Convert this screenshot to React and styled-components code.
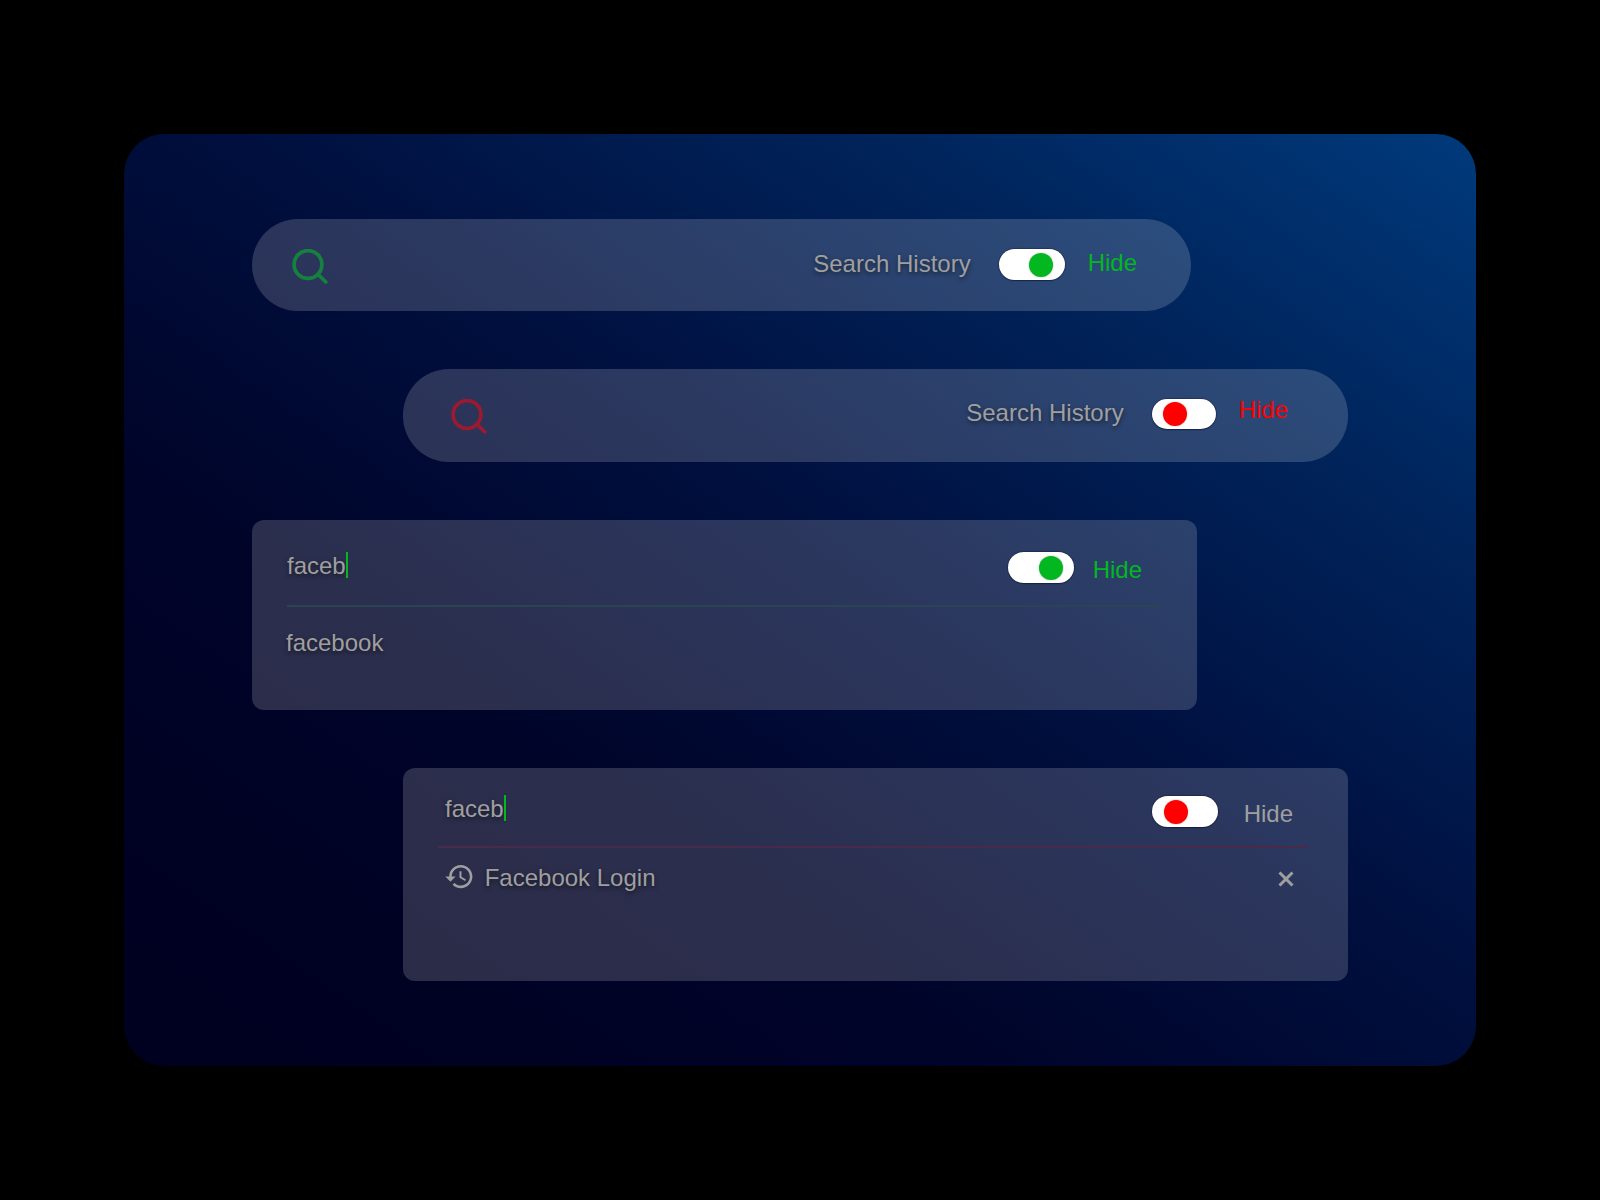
import React from 'react';
import styled, { createGlobalStyle } from 'styled-components';

const Global = createGlobalStyle`
  html, body { margin: 0; padding: 0; background: #000; }
  body { font-family: "Liberation Sans", Arial, sans-serif; }
`;

const Page = styled.div`
  width: 1600px;
  height: 1200px;
  padding: 134px 124px;
  box-sizing: border-box;
  background: #000;
`;

const Frame = styled.main`
  width: 1352px;
  height: 932px;
  box-sizing: border-box;
  padding: 85px 128px 0;
  border-radius: 40px;
  background: linear-gradient(to top right, #00001f 0%, #000429 32%, #000f3e 54%, #00235a 77%, #003a7c 100%);
  display: flex;
  flex-direction: column;
  align-items: flex-start;
  gap: 58px;
`;

const Pill = styled.section`
  width: ${p => p.$width}px;
  height: ${p => p.$height}px;
  margin-left: ${p => p.$indent || 0}px;
  border-radius: 46px;
  background: rgba(255, 255, 255, 0.17);
  box-sizing: border-box;
  padding: 30px ${p => p.$right}px 0 ${p => p.$left}px;
  display: flex;
  align-items: flex-start;
`;

const Card = styled.section`
  width: ${p => p.$width}px;
  height: ${p => p.$height}px;
  margin-left: ${p => p.$indent || 0}px;
  border-radius: 12px;
  background: rgba(255, 255, 255, 0.17);
  box-sizing: border-box;
  padding: 0 ${p => p.$right}px 0 35px;
  display: flex;
  flex-direction: column;
`;

const CardHead = styled.header`
  height: ${p => p.$height}px;
  box-sizing: border-box;
  padding: ${p => p.$top}px ${p => p.$right}px 0 ${p => p.$left}px;
  display: flex;
  align-items: flex-start;
  border-bottom: 2px solid ${p => p.$line};
`;

const Label = styled.span`
  font-size: 24px;
  line-height: 28px;
  color: #9f9f9f;
  text-shadow: 0 2px 4px rgba(0, 0, 0, 0.5);
  white-space: nowrap;
  margin-top: ${p => p.$shift || 0}px;
  margin-left: ${p => (p.$push ? 'auto' : `${p.$left || 0}px`)};
`;

const Typed = styled.div`
  display: flex;
  align-items: flex-start;
  margin-right: auto;
`;

const Caret = styled.i`
  display: block;
  width: 2px;
  height: 26px;
  margin-left: 0.5px;
  background: #03b721;
`;

const Hide = styled.span`
  font-size: 24px;
  line-height: 28px;
  color: ${p => p.$color};
  white-space: nowrap;
  margin-top: ${p => p.$shift || 0}px;
  margin-left: ${p => p.$gap}px;
`;

const Toggle = styled.div`
  width: ${p => p.$w}px;
  height: ${p => p.$h}px;
  margin-left: ${p => p.$left || 0}px;
  margin-top: ${p => p.$shift || 0}px;
  flex: none;
  box-sizing: border-box;
  padding: 0 ${p => p.$inset || 11.5}px;
  border-radius: 16px;
  background: #fff;
  box-shadow: 0 0 1px 0.5px rgba(10, 14, 40, 0.6), 0 1px 1px rgba(10, 14, 40, 0.35);
  display: flex;
  align-items: center;
  justify-content: ${p => (p.$on ? 'flex-end' : 'flex-start')};
`;

const Knob = styled.span`
  width: 24px;
  height: 24px;
  border-radius: 50%;
  background: ${p => p.$color};
  box-shadow: 0 0 2px rgba(0, 0, 0, 0.3);
`;

const Suggestion = styled.div`
  margin-top: 22px;
  margin-left: -1px;
`;

const HistoryRow = styled.div`
  display: flex;
  align-items: flex-start;
  padding: 13px 14px 0 5.7px;
`;

const RowIcon = styled.svg`
  flex: none;
  display: block;
`;

const Search = ({ color }) => (
  <RowIcon width="36" height="36" viewBox="0 0 36 36" fill="none" stroke={color} strokeWidth="3.7" strokeLinecap="round">
    <circle cx="16" cy="15.5" r="13.9" />
    <line x1="26.3" y1="25.6" x2="33.8" y2="33" />
  </RowIcon>
);

const HistoryIcon = () => (
  <RowIcon width="31" height="31" viewBox="0 0 24 24" fill="#9f9f9f">
    <path d="M13 3c-4.97 0-9 4.03-9 9H1l3.89 3.89.07.14L9 12H6c0-3.87 3.13-7 7-7s7 3.13 7 7-3.13 7-7 7c-1.93 0-3.68-.79-4.94-2.06l-1.42 1.42C8.27 19.99 10.51 21 13 21c4.97 0 9-4.03 9-9s-4.03-9-9-9zm-1 5v5l4.28 2.54.72-1.21-3.5-2.08V8H12z" />
  </RowIcon>
);

const CloseIcon = styled.svg`
  flex: none;
  display: block;
  margin-left: auto;
  margin-top: 10px;
`;

const Close = () => (
  <CloseIcon width="16" height="16" viewBox="0 0 16 16" stroke="#9f9f9f" strokeWidth="3" fill="none">
    <line x1="1.5" y1="1.5" x2="14.5" y2="14.5" />
    <line x1="14.5" y1="1.5" x2="1.5" y2="14.5" />
  </CloseIcon>
);

export default function App() {
  return (
    <Page>
      <Global />
      <Frame>
        <Pill $width={939} $height={92} $left={40} $right={54}>
          <Search color="#16803f" />
          <Label $push $shift={1}>Search History</Label>
          <Toggle $w={66} $h={31} $left={28} $on><Knob $color="#03b721" /></Toggle>
          <Hide $color="#03b721" $gap={23}>Hide</Hide>
        </Pill>
        <Pill $width={945} $height={93} $indent={151} $left={48} $right={60}>
          <Search color="#9a1a30" />
          <Label $push>Search History</Label>
          <Toggle $w={64} $h={30} $left={28}><Knob $color="#ff0000" /></Toggle>
          <Hide $color="#ff0000" $gap={23} $shift={-3}>Hide</Hide>
        </Pill>
        <Card $width={945} $height={190} $right={34}>
          <CardHead $height={87} $top={32} $left={0} $right={21} $line="#2a4452">
            <Typed>
              <Label>faceb</Label>
              <Caret />
            </Typed>
            <Toggle $w={66} $h={31} $inset={10.5} $on><Knob $color="#03b721" /></Toggle>
            <Hide $color="#03b721" $gap={19} $shift={4}>Hide</Hide>
          </CardHead>
          <Suggestion><Label>facebook</Label></Suggestion>
        </Card>
        <Card $width={945} $height={213} $indent={151} $right={40}>
          <CardHead $height={80} $top={27} $left={7} $right={15} $line="#4a2a4a">
            <Typed>
              <Label>faceb</Label>
              <Caret />
            </Typed>
            <Toggle $w={66} $h={31} $inset={12.5} $shift={1}><Knob $color="#ff0000" /></Toggle>
            <Hide $color="#9f9f9f" $gap={26} $shift={5}>Hide</Hide>
          </CardHead>
          <HistoryRow>
            <HistoryIcon />
            <Label $left={10} $shift={3}>Facebook Login</Label>
            <Close />
          </HistoryRow>
        </Card>
      </Frame>
    </Page>
  );
}
